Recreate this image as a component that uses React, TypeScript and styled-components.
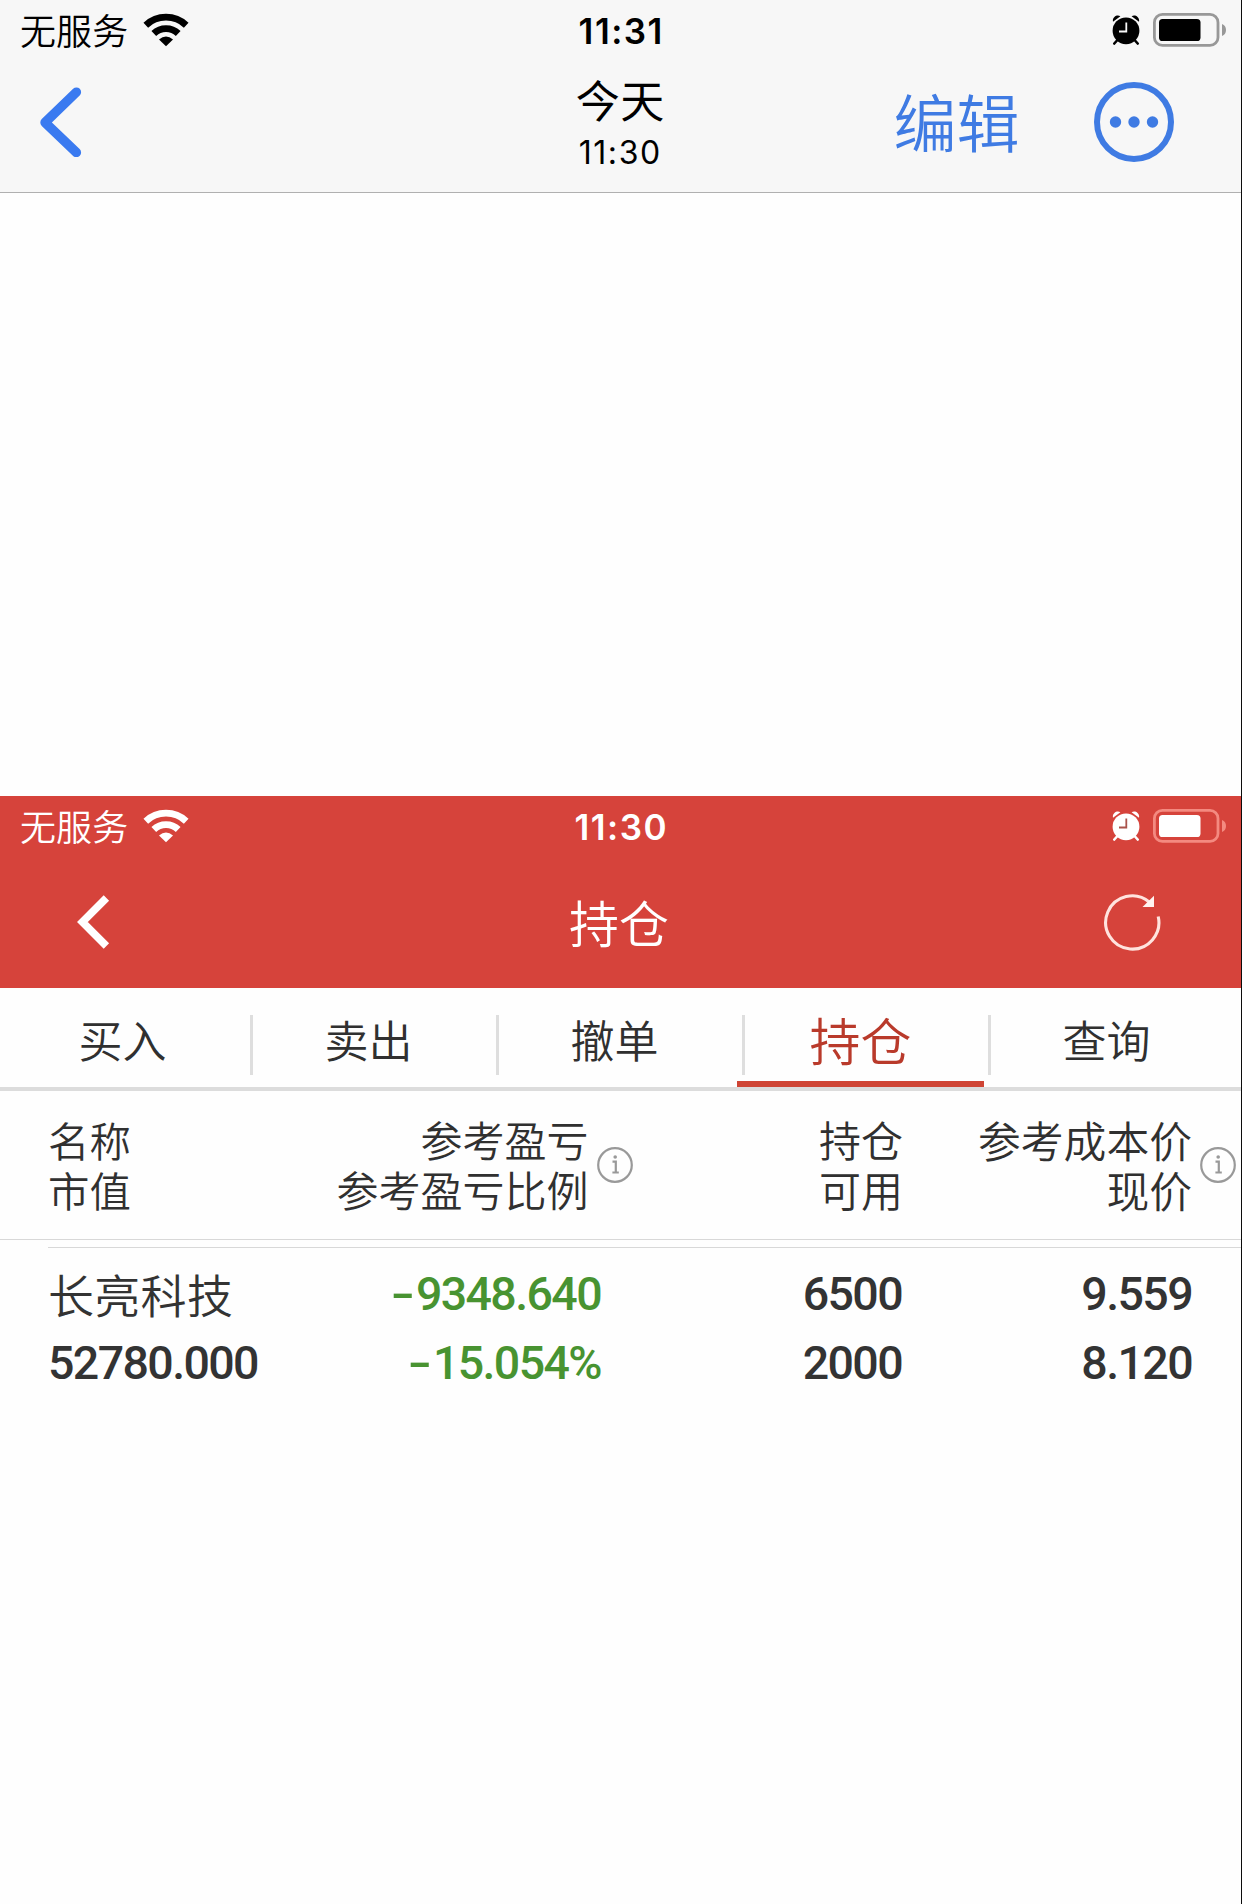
import React from 'react';
import styled, { createGlobalStyle } from 'styled-components';

const cjk = '"Noto Sans CJK SC", sans-serif';

const GlobalStyle = createGlobalStyle`
  *, *::before, *::after { box-sizing: border-box; }
  body { margin: 0; background: #fff; font-family: "Inter", ${cjk}; }
`;

const Screen = styled.div`
  width: 1242px;
  height: 1904px;
  display: flex;
  flex-direction: column;
  overflow: hidden;
  background: #fefefe;
  border-right: 1px solid #0c0c0c;
`;

const PhotosHeader = styled.header`
  height: 193px;
  background: #f7f7f7;
  border-bottom: 1px solid #b0b0b0;
`;

const PhotoArea = styled.div`
  height: 603px;
`;

const TradeHeader = styled.header`
  height: 192px;
  background: #d6433b;
  color: #fff;
`;

const StatusRow = styled.div`
  height: 62px;
  display: grid;
  grid-template-columns: 1fr auto 1fr;
  align-items: center;
  padding: 0 15.5px 2px 20px;
`;

const Carrier = styled.div`
  display: flex;
  align-items: center;
  gap: 15px;
`;

const CarrierName = styled.span`
  font: 350 36px/56px ${cjk};
  letter-spacing: 0.1px;
  padding-bottom: 2px;
`;

const Clock = styled.span`
  font: 600 35px/56px "Inter", sans-serif;
  letter-spacing: 1.5px;
  padding: 2px 3px 0 0;
`;

const StatusIcons = styled.div`
  display: flex;
  align-items: center;
  justify-content: flex-end;
  gap: 13px;
`;

const PhotosNav = styled.div`
  height: 130px;
  display: grid;
  grid-template-columns: 1fr auto 1fr;
  align-items: start;
  padding: 0 67.5px 0 38px;
`;

const BackSlot = styled.div`
  padding-top: 23px;
`;

const DateTitle = styled.div`
  display: flex;
  flex-direction: column;
  align-items: center;
  margin-left: 29px;
`;

const Day = styled.span`
  font: 400 44px/52px ${cjk};
  letter-spacing: 0.6px;
  padding-top: 11px;
`;

const Time = styled.span`
  font: 400 32px/40px "Inter", sans-serif;
  letter-spacing: 1.6px;
  padding-top: 8px;
`;

const NavActions = styled.div`
  display: flex;
  justify-content: flex-end;
  align-items: center;
  gap: 74px;
  height: 120px;
`;

const EditButton = styled.button`
  border: 0;
  padding: 0 0 5px;
  background: none;
  color: #3f7be3;
  font: 350 63px/90px ${cjk};
`;

const TradeNav = styled.div`
  height: 130px;
  display: grid;
  grid-template-columns: 1fr auto 1fr;
  align-items: center;
  padding: 0 80px 2px 77px;
`;

const TradeTitle = styled.h1`
  margin: 0;
  padding-bottom: 3px;
  font: 350 50px/70px ${cjk};
`;

const EndSlot = styled.div`
  display: flex;
  justify-content: flex-end;
`;

const Tabs = styled.nav`
  height: 103px;
  display: flex;
  border-bottom: 4px solid #dcdcdc;
`;

const Tab = styled.div<{ $active?: boolean }>`
  position: relative;
  width: 246px;
  height: 99px;
  flex: none;
  display: flex;
  align-items: center;
  justify-content: center;
  font: 350 ${p => (p.$active ? 51 : 44)}px/60px ${cjk};
  color: ${p => (p.$active ? '#b93a2b' : '#303030')};
  padding: 3px 1px 0 0;

  &:not(:last-child)::after {
    content: '';
    position: absolute;
    right: -7px;
    top: 27px;
    width: 3px;
    height: 60px;
    background: #dedede;
  }

  &::before {
    content: '';
    position: absolute;
    left: ${p => (p.$active ? -1 : 0)}px;
    right: 0;
    bottom: 0;
    height: 6px;
    background: ${p => (p.$active ? '#cf4434' : 'transparent')};
  }
`;

const Columns = styled.div`
  display: grid;
  grid-template-columns: 260px 294px 301px 290px;
  padding-left: 48px;
`;

const HeaderRow = styled(Columns)`
  height: 149px;
  padding-top: 23px;
  border-bottom: 1px solid #d8d8d8;
`;

const HeaderCell = styled.div<{ $right?: boolean; $shift?: number }>`
  display: flex;
  align-items: flex-start;
  justify-content: ${p => (p.$right ? 'flex-end' : 'flex-start')};
  gap: 8px;
  margin-right: ${p => p.$shift ?? 0}px;
`;

const HeaderText = styled.div<{ $size: number; $right?: boolean }>`
  display: flex;
  flex-direction: column;
  align-items: ${p => (p.$right ? 'flex-end' : 'flex-start')};
  font: 350 ${p => p.$size}px/50px ${cjk};
  color: #303030;
  white-space: nowrap;
`;

const InfoSlot = styled.span`
  display: flex;
  padding-top: 33px;
`;

const Holding = styled(Columns)`
  margin: 7px 0 0 48px;
  padding: 11px 0 0;
  border-top: 1px solid #d8d8d8;
`;

const HoldingCell = styled.div<{ $right?: boolean; $loss?: boolean }>`
  display: flex;
  flex-direction: column;
  align-items: ${p => (p.$right ? 'flex-end' : 'flex-start')};
  color: ${p => (p.$loss ? '#489331' : '#333')};
  margin-right: ${p => (p.$right ? 1 : 0)}px;
`;

const StockName = styled.span`
  font: 350 46px/69px ${cjk};
  letter-spacing: 0.3px;
`;

const Figure = styled.span`
  position: relative;
  top: 1px;
  font: 500 46.5px/69px "Roboto", sans-serif;
  letter-spacing: -1.6px;
  white-space: nowrap;
`;

const Minus = styled.span`
  display: inline-block;
  transform: scaleX(1.5);
  transform-origin: right center;
  margin-right: 4px;
`;

const WifiIcon = () => (
  <svg width="46" height="34" viewBox="0 0 46 34" fill="none" stroke="currentColor">
    <path d="M2.8 12.2 A29.5 29.5 0 0 1 43.2 12.2" strokeWidth="6.8" />
    <path d="M10.8 20.5 A17.5 17.5 0 0 1 35.2 20.5" strokeWidth="6.8" />
    <path d="M16 26.4 Q23 20.4 30 26.4 L23 33.3 Z" fill="currentColor" stroke="none" />
  </svg>
);

const AlarmIcon = ({ hand }: { hand: string }) => (
  <svg width="28" height="30" viewBox="0 0 28 30" fill="currentColor">
    <path d="M1 6.8 C0 2 5 -1 8.4 1.2 Z M27 6.8 C28 2 23 -1 19.6 1.2 Z" />
    <circle cx="14" cy="15.8" r="13.4" />
    <path d="M5 25.5 L2.3 28.5 M23 25.5 L25.7 28.5" stroke="currentColor" strokeWidth="2.6" strokeLinecap="round" />
    <path d="M14.3 7.5 V16.5 H7" fill="none" stroke={hand} strokeWidth="1.8" />
  </svg>
);

const BatteryIcon = ({ frame }: { frame: string }) => (
  <svg width="73" height="34" viewBox="0 0 73 34">
    <rect x="1.4" y="1.4" width="63.6" height="31" rx="8" fill="none" stroke={frame} strokeWidth="2.8" />
    <rect x="6" y="6" width="41.5" height="22" rx="3.6" fill="currentColor" />
    <path d="M69 11 Q73 12.5 73 17 Q73 21.5 69 23 Z" fill={frame} />
  </svg>
);

const BackIcon = () => (
  <svg width="44" height="72" viewBox="0 0 44 72" fill="none" stroke="#3a7af0" strokeWidth="9.4" strokeLinecap="round" strokeLinejoin="round">
    <path d="M38.4 7.1 L7 37.5 L38.4 67.5" />
  </svg>
);

const MoreIcon = () => (
  <svg width="80" height="80" viewBox="0 0 80 80" fill="#3f7be3">
    <circle cx="40" cy="40" r="37" fill="none" stroke="#3f7be3" strokeWidth="6" />
    <circle cx="21.5" cy="40" r="5.7" />
    <circle cx="40" cy="40" r="5.7" />
    <circle cx="58.5" cy="40" r="5.7" />
  </svg>
);

const TradeBackIcon = () => (
  <svg width="34" height="54" viewBox="0 0 34 54" fill="none" stroke="#fff" strokeWidth="7.6">
    <path d="M29.4 3 L5.4 27 L29.4 51" />
  </svg>
);

const RefreshIcon = () => (
  <svg width="58" height="58" viewBox="0 0 58 58" fill="none">
    <path d="M55.2 23.5 A26.6 26.6 0 1 1 46.5 9.2" stroke="#ffe3de" strokeWidth="3.1" />
    <path d="M51 2.8 V14 H39.5 Z" fill="#fff4f1" />
  </svg>
);

const InfoIcon = () => (
  <svg width="36" height="36" viewBox="0 0 36 36" fill="none" stroke="#999">
    <circle cx="18" cy="18" r="16.8" strokeWidth="2.2" />
    <path d="M15.5 14.6 H18.8 V25.5 M15.4 25.5 H21.8" strokeWidth="2.2" />
    <circle cx="18.2" cy="10" r="1.8" fill="#999" stroke="none" />
  </svg>
);

const StatusBar = ({ time, hand, frame }: { time: string; hand: string; frame: string }) => (
  <StatusRow>
    <Carrier>
      <CarrierName>无服务</CarrierName>
      <WifiIcon />
    </Carrier>
    <Clock>{time}</Clock>
    <StatusIcons>
      <AlarmIcon hand={hand} />
      <BatteryIcon frame={frame} />
    </StatusIcons>
  </StatusRow>
);

const tabs = ['买入', '卖出', '撤单', '持仓', '查询'];

export default function App() {
  return (
    <>
      <GlobalStyle />
      <Screen>
        <PhotosHeader>
          <StatusBar time="11:31" hand="#f7f7f7" frame="#989898" />
          <PhotosNav>
            <BackSlot><BackIcon /></BackSlot>
            <DateTitle>
              <Day>今天</Day>
              <Time>11:30</Time>
            </DateTitle>
            <NavActions>
              <EditButton>编辑</EditButton>
              <MoreIcon />
            </NavActions>
          </PhotosNav>
        </PhotosHeader>
        <PhotoArea />
        <TradeHeader>
          <StatusBar time="11:30" hand="#a9534b" frame="#f48a80" />
          <TradeNav>
            <TradeBackIcon />
            <TradeTitle>持仓</TradeTitle>
            <EndSlot><RefreshIcon /></EndSlot>
          </TradeNav>
        </TradeHeader>
        <Tabs>
          {tabs.map(name => (
            <Tab key={name} $active={name === '持仓'}>{name}</Tab>
          ))}
        </Tabs>
        <HeaderRow>
          <HeaderCell>
            <HeaderText $size={41.4}><span>名称</span><span>市值</span></HeaderText>
          </HeaderCell>
          <HeaderCell $right $shift={-30.5}>
            <HeaderText $size={42} $right><span>参考盈亏</span><span>参考盈亏比例</span></HeaderText>
            <InfoSlot><InfoIcon /></InfoSlot>
          </HeaderCell>
          <HeaderCell $right>
            <HeaderText $size={42} $right><span>持仓</span><span>可用</span></HeaderText>
          </HeaderCell>
          <HeaderCell $right $shift={-43}>
            <HeaderText $size={42.8} $right><span>参考成本价</span><span>现价</span></HeaderText>
            <InfoSlot><InfoIcon /></InfoSlot>
          </HeaderCell>
        </HeaderRow>
        <Holding>
          <HoldingCell>
            <StockName>长亮科技</StockName>
            <Figure>52780.000</Figure>
          </HoldingCell>
          <HoldingCell $right $loss>
            <Figure><Minus>-</Minus>9348.640</Figure>
            <Figure><Minus>-</Minus>15.054%</Figure>
          </HoldingCell>
          <HoldingCell $right>
            <Figure>6500</Figure>
            <Figure>2000</Figure>
          </HoldingCell>
          <HoldingCell $right>
            <Figure>9.559</Figure>
            <Figure>8.120</Figure>
          </HoldingCell>
        </Holding>
      </Screen>
    </>
  );
}
